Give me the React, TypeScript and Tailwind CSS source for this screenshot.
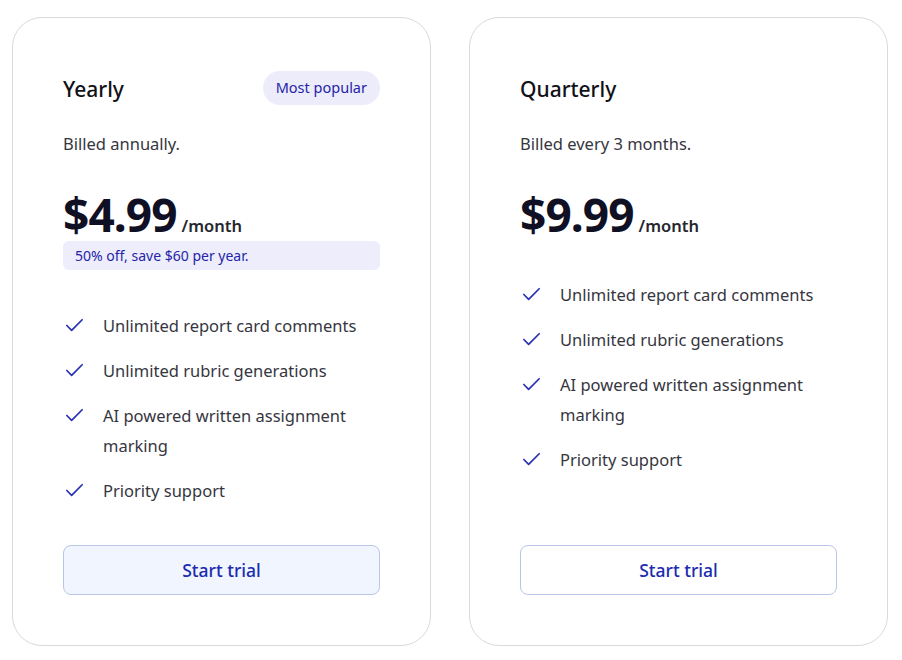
import React from "react";
import { Check } from "lucide-react";

type Plan = {
  name: string;
  billed: string;
  price: string;
  badge?: string;
  note?: string;
  primary?: boolean;
};

const PLANS: Plan[] = [
  {
    name: "Yearly",
    billed: "Billed annually.",
    price: "$4.99",
    badge: "Most popular",
    note: "50% off, save $60 per year.",
    primary: true,
  },
  {
    name: "Quarterly",
    billed: "Billed every 3 months.",
    price: "$9.99",
  },
];

const FEATURES = [
  "Unlimited report card comments",
  "Unlimited rubric generations",
  "AI powered written assignment marking",
  "Priority support",
];

function PlanCard({ plan }: { plan: Plan }) {
  return (
    <div className="flex flex-col rounded-[30px] border border-[#d9d9de] bg-white px-[50px] pt-[53px] pb-[50px]">
      <div className="flex h-[34px] items-center justify-between">
        <h3 className="pt-[3px] text-[21px] font-medium text-[#111118]">{plan.name}</h3>
        {plan.badge && (
          <span className="flex h-[34px] items-center rounded-full bg-[#ececfb] px-[13px] text-[14.5px] text-[#2424a8]">
            {plan.badge}
          </span>
        )}
      </div>

      <p className="mt-[26px] text-[16.5px] leading-[26px] text-[#363640]">{plan.billed}</p>

      <div className="mt-[33px] flex items-baseline gap-[5px]">
        <span className="text-[46px] font-bold leading-[48px] tracking-[-0.02em] text-[#101024]">
          {plan.price}
        </span>
        <span className="text-[16.5px] font-semibold text-[#26262e]">/month</span>
      </div>

      {plan.note && (
        <div className="mt-[2px] flex h-[29px] items-center rounded-md bg-[#ededfb] px-[12px] text-[14px] text-[#2424a8]">
          {plan.note}
        </div>
      )}

      <ul className="mt-[41px] flex flex-col gap-[15px]">
        {FEATURES.map((f) => (
          <li key={f} className="flex items-start gap-[17px] text-[16.5px] leading-[30px] text-[#363640]">
            <Check className="mt-[3px] h-[23px] w-[23px] shrink-0 text-[#2a32b4]" strokeWidth={1.8} />
            <span>{f}</span>
          </li>
        ))}
      </ul>

      <div className="mt-auto pt-[39px]">
        <button
          className={`h-[50px] w-full rounded-lg border border-[#b9c6e6] text-[17.5px] font-medium text-[#1b2bb0] ${
            plan.primary ? "bg-[#f0f5ff]" : "bg-white"
          }`}
        >
          Start trial
        </button>
      </div>
    </div>
  );
}

export default function App() {
  return (
    <div
      className="min-h-screen bg-white pl-[12px] pr-[14px] pt-[17px]"
      style={{ fontFamily: "'Noto Sans', 'Open Sans', sans-serif" }}
    >
      <div className="grid grid-cols-2 gap-[38px]">
        {PLANS.map((p) => (
          <PlanCard key={p.name} plan={p} />
        ))}
      </div>
    </div>
  );
}
